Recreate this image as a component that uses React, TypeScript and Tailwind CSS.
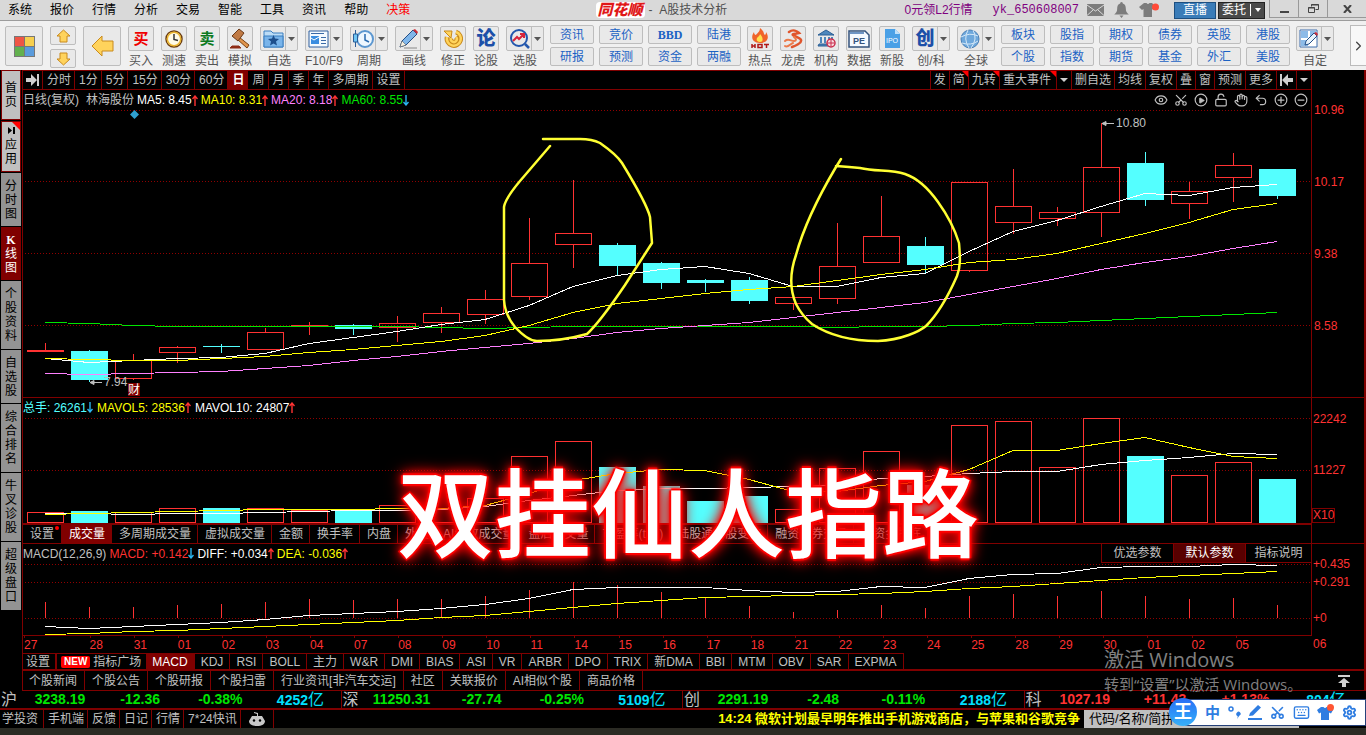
import React from 'react';
import { ChevronRight, Circle, Eye, Hand, Keyboard, LockOpen, Minus, Play, Plus, Scissors, Settings, Undo2 } from 'lucide-react';

type Candle = [high: number, top: number, bottom: number, low: number, down: boolean];

const START_X = 45;
const STEP = 44;
const BODY = 37;

const xAt = (i: number) => START_X + i * STEP;

const candles: Candle[] = [
  [343, 350, 352, 352, false],
  [350, 351, 380, 382, true],
  [354, 360, 378, 380, false],
  [346, 347, 352, 363, false],
  [344, 346, 347, 353, true],
  [328, 332, 349, 349, false],
  [322, 325, 327, 335, false],
  [324, 325, 329, 335, true],
  [316, 323, 327, 342, false],
  [307, 313, 322, 333, false],
  [290, 299, 314, 324, false],
  [218, 263, 296, 300, false],
  [180, 233, 244, 268, false],
  [243, 245, 266, 275, true],
  [262, 263, 283, 289, true],
  [279, 280, 283, 292, true],
  [277, 280, 301, 304, true],
  [297, 297, 303, 310, false],
  [223, 266, 298, 304, false],
  [196, 236, 262, 262, false],
  [237, 246, 265, 273, true],
  [182, 182, 270, 272, false],
  [169, 206, 222, 234, false],
  [207, 212, 218, 226, false],
  [123, 167, 212, 237, false],
  [152, 163, 200, 206, true],
  [182, 191, 203, 219, false],
  [153, 165, 177, 202, false],
  [169, 169, 196, 199, true],
];

const ma5 = [358, 362, 360, 358, 357, 353, 343, 337, 331, 324, 319, 305, 286, 275, 269, 266, 273, 286, 286, 277, 273, 251, 231, 220, 206, 193, 195, 187, 184];
const ma10 = [358, 359, 360, 360, 358, 356, 352, 349, 345, 341, 335, 325, 312, 303, 298, 293, 289, 286, 280, 274, 269, 262, 259, 253, 243, 233, 222, 209, 203];
const ma20 = [373, 374, 373, 372, 371, 368, 365, 360, 356, 351, 347, 343, 338, 332, 328, 325, 322, 317, 312, 307, 302, 294, 286, 278, 269, 262, 256, 248, 241];
const ma60 = [322, 323, 325, 326, 326, 326, 326, 326, 326, 327, 328, 327, 326, 326, 326, 326, 326, 326, 327, 326, 326, 325, 323, 322, 320, 318, 316, 314, 312];

const volumes = [512, 511, 512, 508, 508, 508, 510, 510, 505, 509, 498, 456, 441, 467, 486, 501, 496, 509, 468, 451, 485, 425, 421, 467, 418, 456, 475, 462, 479];
const mavol5 = [514, 513, 512, 511, 510, 509, 509, 509, 508, 508, 505, 493, 480, 473, 469, 470, 479, 491, 491, 485, 481, 469, 450, 450, 443, 437, 447, 456, 458];
const mavol10 = [513, 513, 514, 513, 513, 512, 511, 510, 510, 509, 506, 500, 495, 490, 488, 488, 487, 486, 484, 478, 476, 473, 471, 471, 464, 460, 457, 453, 454];

const macdBars = [602, 607, 607, 605, 604, 602, 599, 600, 599, 599, 596, 590, 582, 585, 592, 597, 606, 612, 610, 605, 608, 596, 594, 596, 591, 596, 599, 598, 605];
const diff = [626, 628, 626, 624, 622, 619, 615, 613, 611, 608, 604, 598, 589, 587, 587, 587, 590, 592, 591, 586, 587, 578, 574, 573, 567, 566, 566, 564, 565];
const dea = [634, 633, 631, 630, 628, 626, 624, 622, 620, 617, 615, 611, 607, 603, 600, 597, 596, 595, 594, 593, 591, 588, 586, 583, 580, 577, 575, 573, 571];

const dates = ['28', '31', '01', '02', '03', '04', '07', '08', '09', '10', '11', '14', '15', '16', '17', '18', '21', '22', '23', '24', '25', '28', '29', '30', '01', '02'];

const menus = ['系统', '报价', '行情', '分析', '交易', '智能', '工具', '资讯', '帮助'];
const periods = ['分时', '1分', '5分', '15分', '30分', '60分', '日', '周', '月', '季', '年', '多周期', '设置'];
const volumeTabs = ['成交量', '多周期成交量', '虚拟成交量', '金额', '换手率', '内盘', '外盘', 'AI缩放成交量', '盘后成交量', '市盈率(ttm)', '陆股通持股变化', '融资融券交易', '大资金抄底'];
const indicatorTabs = ['MACD', 'KDJ', 'RSI', 'BOLL', '主力', 'W&R', 'DMI', 'BIAS', 'ASI', 'VR', 'ARBR', 'DPO', 'TRIX', '新DMA', 'BBI', 'MTM', 'OBV', 'SAR', 'EXPMA'];
const newsTabs = ['个股新闻', '个股公告', '个股研报', '个股扫雷', '行业资讯[非汽车交运]', '社区', '关联报价', 'AI相似个股', '商品价格'];
const bottomTabs = ['学投资', '手机端', '反馈', '日记', '行情', '7*24快讯'];

const indexes = [
  { name: '沪', value: '3238.19', change: '-12.36', pct: '-0.38%', amount: '4252', up: false },
  { name: '深', value: '11250.31', change: '-27.74', pct: '-0.25%', amount: '5109', up: false },
  { name: '创', value: '2291.19', change: '-2.48', pct: '-0.11%', amount: '2188', up: false },
  { name: '科', value: '1027.19', change: '+11.43', pct: '+1.13%', amount: '804', up: true },
];

const Series = ({ data, color }: { data: number[]; color: string }) => (
  <polyline points={data.map((y, i) => `${xAt(i)},${y + 0.5}`).join(' ')} fill="none" stroke={color} strokeWidth="1" />
);

const GridLine = ({ y }: { y: number }) => (
  <line x1="25" x2="1310" y1={y + 0.5} y2={y + 0.5} stroke="#900000" strokeDasharray="1 2" />
);

const Trend = ({ down }: { down?: boolean }) => (
  <svg width="6" height="11" viewBox="0 0 6 11" className="shrink-0" fill="none" strokeWidth="1.400" stroke={down ? '#2ab5f0' : '#ff3232'}>
    {down ? <path d="M3 0v10M.5 7L3 10l2.500-3" /> : <path d="M3 11V1M.5 4L3 1l2.500 3" />}
  </svg>
);

/* ---------- title bar ---------- */

const TitleBar = () => (
  <header className="flex h-[21px] items-center border-b border-[#9c9c9c] bg-[#d9d9d9] text-black">
    <nav className="flex gap-[18px] pl-2">
      {menus.map(m => <button key={m}>{m}</button>)}
      <button className="text-[#ff0000]">决策</button>
    </nav>
    <h1 className="flex flex-1 items-center justify-center gap-1 pl-2 text-[#505050]">
      <span className="rounded-sm bg-white px-[2px] text-[15px] font-black italic leading-4 text-[#e01818]">同花顺</span>
      <span>- &nbsp;A股技术分析</span>
    </h1>
    <div className="flex items-center gap-5 text-[#800080]">
      <a href="#level2">0元领L2行情</a>
      <span className="font-['Liberation_Mono',monospace]">yk_650608007</span>
    </div>
    <div className="flex items-center gap-[10px] pl-2 pr-[15px]">
      <button aria-label="邮件">
        <svg width="17" height="12" viewBox="0 0 17 12" className="block"><rect width="17" height="12" fill="#7c7c7c" /><path d="M0 1l8.500 6L17 1M0 11.500l6-5.500M17 11.500l-6-5.500" stroke="#d9d9d9" fill="none" /></svg>
      </button>
      <button aria-label="提醒">
        <svg width="15" height="16" viewBox="0 0 15 16" className="block" fill="#7c7c7c"><path d="M7.500 0c1 0 1.300.8 1.300 1.500 2.500.8 3 3 3 5 0 3 1 4.500 3 6H.2c2-1.500 3-3 3-6 0-2 .5-4.200 3-5C6.200.8 6.500 0 7.500 0zM5.500 13.500h4L7.500 16z" /></svg>
      </button>
      <button aria-label="换肤">
        <svg width="20" height="16" viewBox="0 0 20 16" className="block"><path d="M5 1l2.500 0q1.500 2 3 0H13l4 4-2.500 3-1.500-1v8H4.500V7L3 8 0 5z" fill="#7c7c7c" /><circle cx="16.500" cy="5" r="3.500" fill="#ff4a38" /></svg>
      </button>
    </div>
    <div className="flex h-[19px] items-center gap-[2px] text-xs text-white">
      <button className="h-[17px] w-[42px] border border-[#1d4f80] bg-[#3a7cb8] leading-[14px]">直播</button>
      <button className="flex h-[17px] w-[47px] items-center justify-center gap-1 border border-[#222] bg-[#4a4a4a] leading-[14px]">
        <span>委托</span>
        <span className="h-3 w-px bg-white" />
        <svg width="6" height="4" viewBox="0 0 6 4" fill="#fff"><path d="M0 0h6L3 4z" /></svg>
      </button>
    </div>
    <div className="ml-1 flex h-[18px] self-start border-b border-l border-[#999] text-[#444]">
      <button aria-label="最小化" className="flex w-[29px] items-end justify-center border-r border-[#999] pb-[4px]"><span className="h-[2px] w-[9px] bg-[#444]" /></button>
      <button aria-label="还原" className="flex w-[29px] items-center justify-center border-r border-[#999]">
        <svg width="11" height="9" viewBox="0 0 11 9" fill="none" stroke="#444"><path d="M3.500 2.500v-2h7v5h-3M.5 3.500h6v5h-6zM3 1h8M0 4h7" /></svg>
      </button>
      <button aria-label="关闭" className="flex w-[38px] items-center justify-center">
        <svg width="9" height="8" viewBox="0 0 9 8" stroke="#444" strokeWidth="2"><path d="M1 0l7 8M8 0L1 8" /></svg>
      </button>
    </div>
  </header>
);

/* ---------- toolbar ---------- */

const FRAME = 'rounded-[2px] border border-[#bdbdbd] bg-[#e9e9e9]';

interface ToolProps {
  label: string;
  drop?: boolean;
  children: React.ReactNode;
}

const Tool = ({ label, drop, children }: ToolProps) => (
  <button className="flex flex-col items-center gap-[2px] pt-[5px] text-[#555]">
    <span className={`flex h-[25px] items-stretch ${FRAME}`}>
      <span className="flex w-6 items-center justify-center">{children}</span>
      {drop && (
        <span className="flex w-3 items-center justify-center border-l border-[#bdbdbd]">
          <svg width="7" height="4" viewBox="0 0 7 4" fill="#555"><path d="M0 0h7L3.500 4z" /></svg>
        </span>
      )}
    </span>
    <span className="leading-4">{label}</span>
  </button>
);

const LinkGrid = ({ rows }: { rows: string[][] }) => (
  <div className="flex flex-col gap-[3px] pt-1">
    {rows.map((row, r) => (
      <div key={r} className="flex gap-[5px]">
        {row.map(t => (
          <button key={t} className={`h-[19px] w-[44px] leading-4 text-[#1b62c4] ${FRAME} ${t === 'BBD' ? "font-['Liberation_Serif',serif] font-bold" : ''}`}>{t}</button>
        ))}
      </div>
    ))}
  </div>
);

const Arrow = ({ d, w, h, box }: { d: string; w: number; h: number; box: string }) => (
  <svg width={w} height={h} viewBox={box}><path d={d} fill="#ffd35c" stroke="#c98a1c" strokeLinejoin="round" /></svg>
);

const Toolbar = () => (
  <div className="flex h-[49px] gap-[7px] overflow-hidden bg-[#f0f0f0] pl-[5px]">
    <button aria-label="主页" className={`mt-[5px] flex h-10 w-[38px] items-center justify-center ${FRAME}`}>
      <svg width="21" height="21" viewBox="0 0 21 21"><path fill="#777" d="M0 0h21v21H0z" /><path fill="#ef5545" d="M1 1h9v9H1z" /><path fill="#f7cf4e" d="M11 1h9v9h-9z" /><path fill="#62b04e" d="M1 11h9v9H1z" /><path fill="#5a9bdc" d="M11 11h9v9h-9z" /></svg>
    </button>
    <div className="flex flex-col gap-1 pt-[5px]">
      <button aria-label="上一个" className={`flex h-[19px] w-[26px] items-center justify-center ${FRAME}`}><Arrow w={15} h={14} box="0 0 15 14" d="M7.500 1L14 7h-3v6H4V7H1z" /></button>
      <button aria-label="下一个" className={`flex h-[19px] w-[26px] items-center justify-center ${FRAME}`}><Arrow w={15} h={14} box="0 0 15 14" d="M7.500 13L14 7h-3V1H4v6H1z" /></button>
    </div>
    <button aria-label="返回" className={`mt-[5px] flex h-10 w-[38px] items-center justify-center ${FRAME}`}><Arrow w={23} h={22} box="0 0 23 22" d="M1 11L11 1v5h11v10H11v5z" /></button>

    <Tool label="买入"><b className="text-[15px] leading-5 text-[#f00000]">买</b></Tool>
    <Tool label="测速">
      <svg width="20" height="20" viewBox="0 0 20 20"><circle cx="10" cy="10" r="8" fill="#fffbe8" stroke="#6b3d10" strokeWidth="1.500" /><circle cx="10" cy="10" r="6.700" fill="none" stroke="#eab42e" strokeWidth="1.500" /><path d="M10 5v5.500l4 1" stroke="#333" strokeWidth="1.500" fill="none" /></svg>
    </Tool>
    <Tool label="卖出"><b className="text-[15px] leading-5 text-[#0b7a1e]">卖</b></Tool>
    <Tool label="模拟">
      <svg width="22" height="22" viewBox="0 0 22 22"><path d="M10 9l10 8-2 3-10-9z" fill="#e0954d" stroke="#7b4010" /><path d="M3 8l7-7 5 4-6 8z" fill="#c07a45" stroke="#6b3a18" /><path d="M1 20l2-2h7l2 2z" fill="#8f2d14" stroke="#8f2d14" /></svg>
    </Tool>
    <Tool label="自选" drop>
      <svg width="21" height="19" viewBox="0 0 21 19"><path d="M1 2h7l2 2h10v14H1z" fill="#bcdcf6" stroke="#3b7fc0" /><path d="M1 7h19v11H1z" fill="#79b4ea" stroke="#3b7fc0" /><path d="M10.500 6l1.500 3.500 4 .4-3 2.600 1 4-3.500-2-3.500 2 1-4-3-2.600 4-.4z" fill="#1d4e8c" /></svg>
    </Tool>
    <Tool label="F10/F9" drop>
      <svg width="21" height="18" viewBox="0 0 21 18"><path d="M1 1h19v16H1z" fill="#f4faff" stroke="#2f5f9e" /><path d="M3 6h8v8H3z" fill="#3a8de0" /><path d="M3 8l3 2 5-3" stroke="#fff" fill="none" /><path d="M3 3.500h13M13 7.500h5M13 10.500h5M13 13.500h5" stroke="#3a6aa8" /></svg>
    </Tool>
    <Tool label="周期" drop>
      <svg width="22" height="20" viewBox="0 0 22 20"><circle cx="13" cy="10" r="8" fill="#eef7ff" stroke="#5c97d0" strokeWidth="2" /><path d="M13 5v6l4 2" stroke="#2a6bb0" fill="none" strokeWidth="1.500" /><path d="M3.500 1v17" stroke="#2a5c96" /><path d="M1.500 5h4v8h-4z" fill="#6fc6f5" stroke="#2a5c96" /></svg>
    </Tool>
    <Tool label="画线" drop>
      <svg width="21" height="21" viewBox="0 0 21 21"><path d="M2 19l2-6L15 2l4 4L8 17z" fill="#7fb6ea" stroke="#254f86" /><path d="M15 2l4 4 1-2-3-3z" fill="#cf2f3a" /><path d="M2 19l2-6 4 4z" fill="#f5f0e0" stroke="#555" strokeWidth=".5" /><path d="M6 20h13" stroke="#888" /></svg>
    </Tool>
    <Tool label="修正">
      <svg width="20" height="20" viewBox="0 0 20 20" fill="none">
        <path d="M4 8a7 7 0 1 0 9-5M8 9a3 3 0 1 0 5-1" stroke="#c98a1c" strokeWidth="4.500" />
        <path d="M4 8a7 7 0 1 0 9-5M8 9a3 3 0 1 0 5-1" stroke="#ffd45c" strokeWidth="2.500" />
        <path d="M1 2h8l-1 7z" fill="#ffd45c" stroke="#c98a1c" />
      </svg>
    </Tool>
    <Tool label="论股"><b className="text-[19px] font-black leading-6 text-[#1c4fa8]">论</b></Tool>
    <Tool label="选股" drop>
      <svg width="21" height="21" viewBox="0 0 21 21" fill="none"><circle cx="10" cy="10" r="8" stroke="#2357ad" strokeWidth="2" /><path d="M16 16l4 4" stroke="#2357ad" strokeWidth="2.500" /><path d="M4 13l4-4 2 2 5-5M11 6h4v4" stroke="#d8243a" strokeWidth="2" /></svg>
    </Tool>

    <div className="-mx-px"><LinkGrid rows={[['资讯', '竞价', 'BBD', '陆港'], ['研报', '预测', '资金', '两融']]} /></div>

    <Tool label="热点">
      <svg width="20" height="21" viewBox="0 0 20 21"><path d="M10 0c5 4 3 6 5 7 1-1 1-2 1-3 3 4 3 11-6 11S1 8 4 4c0 2 1 3 2 3 1-2 4-3 4-7z" fill="#f0642a" /><path d="M10 6c3 3 4 8 0 8s-4-4-2-5c1-1 2-2 2-3z" fill="#ffe14d" /><path d="M2 16v4M5 16v4M2 18h3M8 16.500h4v3H8zM14 16.500h5M16.500 16v4" stroke="#b01818" strokeWidth="1.500" fill="none" /></svg>
    </Tool>
    <Tool label="龙虎">
      <svg width="21" height="20" viewBox="0 0 21 20" fill="none" strokeLinecap="round"><path d="M6 3c4-3 8-1 10 1l-5 1c-5 1 6 3 7 6s-6 6-9 7" stroke="#e0552c" strokeWidth="2.500" /><path d="M2 12c3-3 6 0 9 0s2-3 0-4M2 17c3 2 5-2 8-3" stroke="#ec7a4a" strokeWidth="2" /></svg>
    </Tool>
    <Tool label="机构">
      <svg width="19" height="19" viewBox="0 0 19 19"><path d="M1 6l8-5 8 5zM2 15h10v2H1z" fill="#4d87bd" stroke="#2b5f95" /><path d="M4 8v6M8 8v6M12 8v3M15 8v2" stroke="#4d87bd" strokeWidth="2" /><circle cx="14" cy="14" r="4" fill="#f8dbe0" stroke="#c92c4c" strokeWidth="1.500" /><path d="M11 14h6M14 11v6" stroke="#c92c4c" /></svg>
    </Tool>
    <Tool label="数据">
      <svg width="22" height="18" viewBox="0 0 22 18"><path d="M1 1h16l4 4v12H1z" fill="#f5f9ff" stroke="#34537e" strokeWidth="1.500" /><path d="M2 3h14" stroke="#6e94c4" strokeWidth="2" /><text x="11" y="14" textAnchor="middle" fontSize="9" fontWeight="bold" fill="#34537e">PE</text></svg>
    </Tool>
    <Tool label="新股">
      <svg width="15" height="19" viewBox="0 0 15 19"><path d="M0 0h10l5 5v14H0z" fill="#4aa0e6" /><path d="M10 0l5 5h-5z" fill="#bfe0fa" /><text x="7" y="14" textAnchor="middle" fontSize="7" fill="#fff">IPO</text></svg>
    </Tool>
    <Tool label="创/科" drop><b className="text-[19px] font-black leading-6 text-[#1c4fa8]">创</b></Tool>
    <Tool label="全球" drop>
      <svg width="20" height="20" viewBox="0 0 20 20" fill="none"><circle cx="10" cy="10" r="9" fill="#6ea8dc" stroke="#4a7fb5" /><path d="M1 8q9-5 17-1M2 14q9 3 16-2M8 1q-5 9 1 18M13 1q5 9-2 18" stroke="#d5e8f8" /></svg>
    </Tool>

    <div className="-mx-px"><LinkGrid rows={[['板块', '股指', '期权', '债券', '英股', '港股'], ['个股', '指数', '期货', '基金', '外汇', '美股']]} /></div>

    <Tool label="自定" drop>
      <svg width="20" height="19" viewBox="0 0 20 19"><path d="M1 1h17v17H1z" fill="#fff" stroke="#3f6fae" /><path d="M2 2h7v7H2zM11 2h6v7h-6zM2 11h7v6H2z" fill="#8dbbe8" /><path d="M6 16l1-4 8-8 3 3-8 8z" fill="#e9f3fc" stroke="#254f86" /><path d="M15 4l3 3 1-2-2-2z" fill="#cf2f3a" /></svg>
    </Tool>
    <button aria-label="更多工具" className="ml-auto mt-1 flex h-[41px] w-4 items-center justify-center border border-r-0 border-[#bbb] bg-[#f8f8f8] text-[#444]"><ChevronRight size={16} /></button>
  </div>
);

/* ---------- left side tabs ---------- */

const sideTabs = [
  { text: '首页', cls: 'h-[50px] border border-[#800000] bg-[#c0c0c0] text-black' },
  { text: '应用', cls: 'h-[51px] border border-[#800000] bg-[#c0c0c0] text-black', icon: true },
  { text: '分时图', cls: 'h-[53px] bg-[#939393] text-black' },
  { text: 'K线图', cls: 'h-[53px] bg-[#800000] text-white' },
  { text: '个股资料', cls: 'h-[68px] bg-[#939393] text-black' },
  { text: '自选股', cls: 'h-[53px] bg-[#939393] text-black' },
  { text: '综合排名', cls: 'h-[68px] bg-[#939393] text-black' },
  { text: '牛叉诊股', cls: 'h-[68px] bg-[#939393] text-black' },
  { text: '超级盘口', cls: 'h-[68px] bg-[#939393] text-black' },
];

const SideBar = () => (
  <aside className="flex w-[22px] shrink-0 flex-col pl-px pr-px">
    {sideTabs.map(tab => (
      <div key={tab.text} className="border-b border-black">
        <button className={`relative flex w-full flex-col items-center justify-center leading-[14px] ${tab.cls}`}>
          {tab.icon && (
            <>
              <span className="absolute right-0 top-0 border-l-[8px] border-t-[8px] border-l-transparent border-t-[#ff0000]" />
              <svg width="7" height="7" viewBox="0 0 7 7" className="mb-1"><path d="M0 0l4 3.500L0 7zM5 0h2v7H5z" /></svg>
            </>
          )}
          {tab.text.split('').map((c, i) => <span key={i} className={c === 'K' ? "font-['Liberation_Serif',serif] font-bold" : ''}>{c}</span>)}
        </button>
      </div>
    ))}
  </aside>
);

/* ---------- charts ---------- */

const CELL = 'relative flex items-center border-l border-[#800000] px-[3px]';

const Corner = () => (
  <span className="absolute right-0 top-0 border-l-[6px] border-t-[6px] border-l-transparent border-t-[#ff0000]" />
);

const Caret = () => (
  <svg width="8" height="4" viewBox="0 0 8 4" fill="#d0d0d0"><path d="M0 0h8L4 4z" /></svg>
);

const PeriodBar = () => (
  <div className="flex h-5 border-b border-t border-[#800000] leading-[18px]">
    <button aria-label="向右" className="flex w-5 items-center justify-center border-r border-[#800000]">
      <svg width="13" height="12" viewBox="0 0 13 12" fill="#d0d0d0"><path d="M0 4h5V0l6 6-6 6V8H0zM11 0h2v12h-2z" /></svg>
    </button>
    {periods.map(p => (
      <button key={p} className={`border-r border-[#800000] pl-1 pr-[3px] ${p === '日' ? 'bg-[#800000] font-bold text-white' : ''}`}>{p}</button>
    ))}
    <div className="ml-auto flex">
      <button className={CELL}>发</button>
      <button className={CELL}>简<Corner /></button>
      <button className={CELL}>九转<Corner /></button>
      <button className={`${CELL} pr-[5px]`}>重大事件<Corner /></button>
      <button className={CELL} aria-label="展开事件"><Caret /></button>
      {['删自选', '均线', '复权', '叠', '窗', '预测', '更多'].map(t => <button key={t} className={CELL}>{t}</button>)}
      <button className={CELL} aria-label="向左">
        <svg width="13" height="12" viewBox="0 0 13 12" fill="#d0d0d0"><path d="M13 4H8V0L2 6l6 6V8h5zM0 0h2v12H0z" /></svg>
      </button>
      <button className={CELL} aria-label="展开"><Caret /></button>
    </div>
  </div>
);

const PricePane = () => (
  <section className="border-b border-[#800000]">
    <div className="flex h-5 items-center gap-[3px] leading-5">
      <span className="pr-1">日线(复权)</span>
      <span>林海股份</span>
      <span className="flex items-center text-white">MA5: 8.45<Trend /></span>
      <span className="flex items-center text-[#ffff00]">MA10: 8.31<Trend /></span>
      <span className="flex items-center text-[#ff80ff]">MA20: 8.18<Trend /></span>
      <span className="flex items-center text-[#00e600]">MA60: 8.55<Trend down /></span>
      <div className="ml-auto flex gap-[6px] pr-[3px] text-[#c0c0c0]">
        <button aria-label="显示"><Eye size={14} /></button>
        <button aria-label="剪切"><Scissors size={14} className="-rotate-90" /></button>
        <button aria-label="播放" className="grid place-items-center">
          <Circle size={14} className="col-start-1 row-start-1" />
          <Play size={7} fill="#c0c0c0" className="col-start-1 row-start-1" />
        </button>
        <button aria-label="锁定"><LockOpen size={14} /></button>
        <button aria-label="拖动"><Hand size={14} /></button>
        <button aria-label="撤销"><Undo2 size={14} /></button>
        <button aria-label="放大" className="grid place-items-center">
          <Circle size={14} className="col-start-1 row-start-1" />
          <Plus size={10} strokeWidth={3} className="col-start-1 row-start-1" />
        </button>
        <button aria-label="缩小" className="grid place-items-center">
          <Circle size={14} className="col-start-1 row-start-1" />
          <Minus size={10} strokeWidth={3} className="col-start-1 row-start-1" />
        </button>
      </div>
    </div>
    <svg viewBox="23 110 1288 287" preserveAspectRatio="none" className="block h-[287px] w-full">
      <g shapeRendering="crispEdges">
        {[110, 181, 253, 325].map(y => <GridLine key={y} y={y} />)}
        {candles.map(([high, top, bottom, low, down], i) => {
          const x = xAt(i);
          const color = down ? '#54ffff' : '#ff3232';
          return (
            <g key={i} stroke={color}>
              <path d={`M${x + 0.5} ${high}V${top}M${x + 0.5} ${bottom}V${low}`} />
              {down || bottom - top < 3
                ? <rect x={x - 18} y={top} width={BODY} height={bottom - top} fill={color} stroke="none" />
                : <rect x={x - 17.5} y={top + 0.5} width={BODY - 1} height={bottom - top} fill="none" />}
            </g>
          );
        })}
        <Series data={ma60} color="#00e600" />
        <Series data={ma20} color="#ff80ff" />
        <Series data={ma5} color="#ffffff" />
        <Series data={ma10} color="#ffff00" />
      </g>
      <path d="M134.500 110l4.500 4.500-4.500 4.500-4.500-4.500z" fill="#2f9fd0" />
      <path d="M1102 123.500h12M1102 123.500l4-2v4zM90 382.500h12M90 382.500l4-2v4z" stroke="#c0c0c0" fill="#c0c0c0" />
      <text x="1116" y="127" fontSize="12" fill="#c0c0c0">10.80</text>
      <text x="104" y="386" fontSize="12" fill="#c0c0c0">7.94</text>
      <rect x="128" y="383" width="12" height="13" fill="#800000" />
      <text x="128" y="394" fontSize="12" fill="#fff">财</text>
      <g fill="none" stroke="#ffff32" strokeWidth="2.500" strokeLinecap="round" strokeLinejoin="round">
        <path d="M550 146L520 181Q505 199 504 207V300Q505 315 515 327Q528 341 537 341Q562 341 587 334Q600 322 625 285L652 243L650 217Q647 204 622 163Q617 155 600 143Q592 139 580 139H543" />
        <path d="M841 159L836 167C820 194 805 222 796 255C790 272 790 290 796 304C800 312 806 319 812 324C830 336 852 341 878 341C902 340 920 331 926 326C940 312 950 292 957 276C961 266 960 256 959 243C954 227 946 213 938 202C928 188 917 178 905 174C890 169 876 172 860 168Q850 167 836 166" />
      </g>
    </svg>
  </section>
);

const VolumePane = () => (
  <section>
    <div className="flex h-[19px] items-center gap-1 leading-5">
      <span className="flex items-center text-[#54ffff]">总手: 26261<Trend down /></span>
      <span className="flex items-center text-[#ffff00]">MAVOL5: 28536<Trend /></span>
      <span className="flex items-center text-white">MAVOL10: 24807<Trend /></span>
    </div>
    <svg viewBox="23 417 1288 106" preserveAspectRatio="none" shapeRendering="crispEdges" className="block h-[106px] w-full">
      <GridLine y={418} />
      <GridLine y={470} />
      {volumes.map((top, i) => candles[i][4]
        ? <rect key={i} x={xAt(i) - 18} y={top} width={BODY} height={523 - top} fill="#54ffff" />
        : <rect key={i} x={xAt(i) - 17.5} y={top + 0.5} width={BODY - 1} height={522 - top} fill="none" stroke="#ff3232" />)}
      <Series data={mavol10} color="#ffffff" />
      <Series data={mavol5} color="#ffff00" />
    </svg>
    <div className="flex h-[21px] border-b border-t-2 border-[#800000] leading-[19px]">
      <button className="relative w-[39px] border-r border-[#800000]">
        设置
        <span className="absolute right-[2px] top-[1px] h-1 w-1 rounded-full bg-[#ff0000]" />
      </button>
      {volumeTabs.map((t, i) => (
        <button key={t} className={`shrink-0 whitespace-nowrap border-r border-[#800000] pl-[7px] pr-[6px] ${i === 0 ? 'bg-[#800000] text-white' : ''}`}>{t}</button>
      ))}
    </div>
  </section>
);

const MacdPane = () => (
  <section className="border-b border-[#800000]">
    <div className="flex h-[19px] items-center gap-[3px] leading-4">
      <span>MACD(12,26,9)</span>
      <span className="flex items-center text-[#ff3232]">MACD: +0.142<Trend down /></span>
      <span className="flex items-center text-white">DIFF: +0.034<Trend /></span>
      <span className="flex items-center text-[#ffff00]">DEA: -0.036<Trend /></span>
      <div className="ml-auto flex h-full border-b border-l border-[#800000] leading-[18px]">
        <button className="w-[72px] border-r border-[#800000]">优选参数</button>
        <button className="w-[72px] border-r border-[#800000] bg-[#580000] text-white">默认参数</button>
        <button className="w-[65px]">指标说明</button>
      </div>
    </div>
    <svg viewBox="23 563 1288 72" preserveAspectRatio="none" shapeRendering="crispEdges" className="block h-[72px] w-full">
      <GridLine y={564} />
      <GridLine y={582} />
      <GridLine y={618} />
      {macdBars.map((y, i) => <line key={i} x1={xAt(i) + 0.5} x2={xAt(i) + 0.5} y1={y} y2={618} stroke="#ff3232" />)}
      <Series data={dea} color="#ffff00" />
      <Series data={diff} color="#ffffff" />
    </svg>
  </section>
);

const DATE = 'pl-px before:block before:h-[2px] before:w-px before:bg-[#800000]';

const DateAxis = () => (
  <div className="flex h-[17px] leading-[14px] text-[#ff3232]">
    <span className={`w-0 grow-[66] ${DATE}`}>27</span>
    {dates.map((d, i) => <span key={i} className={`w-0 grow-[44] ${DATE}`}>{d}</span>)}
    <span className={`w-0 grow-[78] ${DATE}`}>05</span>
  </div>
);

const ValueAxis = () => (
  <div className="w-[54px] shrink-0 border-r-2 border-[#800000] text-[#ff3232]">
    <div className="h-[328px] border-b border-[#800000] pl-[2px] pt-1 leading-[72px]">
      {['10.96', '10.17', '9.38', '8.58'].map(v => <div key={v} className="h-[72px]">{v}</div>)}
    </div>
    <div className="h-[146px] border-b border-[#800000]">
      <div className="h-[42px] pl-px leading-[42px]">22242</div>
      <div className="h-[60px] pl-px leading-[60px]">11227</div>
      <div className="mt-2 h-[15px] w-[23px] border border-[#800000] leading-[13px]">X10</div>
    </div>
    <div className="pl-px pt-[11px] leading-[18px]">
      <div>+0.435</div>
      <div>+0.291</div>
      <div className="mt-[18px]">+0</div>
      <div className="mt-2">06</div>
    </div>
  </div>
);

/* ---------- bottom rows ---------- */

const BottomTabs = () => (
  <div className="border-r-2 border-[#800000]">
    <div className="flex h-[18px] border-b-2 border-[#800000]">
      <button className="w-[34px] border-r-2 border-t border-[#800000] pl-[3px] text-left leading-4">设置</button>
      <button className="flex items-center gap-[3px] border-t border-[#800000] pl-1 pr-[5px] leading-4">
        <span className="rounded-[2px] bg-[#ff0000] px-[3px] text-[10px] font-bold leading-[12px] text-white">NEW</span>
        指标广场
      </button>
      {indicatorTabs.map((t, i) => (
        <button key={t} className={`border-r border-t border-[#800000] px-[6px] leading-4 ${i === 0 ? 'bg-[#800000] text-white' : ''}`}>{t}</button>
      ))}
    </div>
    <div className="flex h-5 items-center border-b border-[#800000]">
      {newsTabs.map(t => (
        <button key={t} className="h-full border-r border-[#800000] pl-[7px] pr-[7px] leading-5 first:pl-[6px]">{t}</button>
      ))}
      <button aria-label="置顶" className="ml-auto mr-[14px]">
        <svg width="12" height="12" viewBox="0 0 12 12" fill="#d0d0d0" className="block"><path d="M0 0h12v2H0zM6 3l6 5H8v4H4V8H0z" /></svg>
      </button>
    </div>
  </div>
);

const IndexBar = () => (
  <div className="grid h-[19px] grid-cols-4 border-b-2 border-[#800000] text-sm font-bold leading-[17px]">
    {indexes.map(ix => (
      <div key={ix.name} className={`flex border-r border-[#800000] last:border-r-0 ${ix.up ? 'text-[#ff3232]' : 'text-[#00e600]'}`}>
        <span className="w-[20px] pl-px text-base font-normal leading-[17px] text-[#c0c0c0]">{ix.name}</span>
        <span className="flex-1 text-center">{ix.value}</span>
        <span className="flex-1 text-center">{ix.change}</span>
        <span className="flex-1 text-center">{ix.pct}</span>
        <span className="flex-1 text-center text-[#00e0ff]">{ix.amount}<span className="text-base font-normal leading-[17px]">亿</span></span>
      </div>
    ))}
  </div>
);

const FooterBar = () => (
  <footer className="flex h-[18px] leading-[18px]">
    {bottomTabs.map(t => (
      <button key={t} className="border-r border-[#800000] pl-1 pr-[3px] first:pl-[2px] first:pr-[5px]">{t}</button>
    ))}
    <button aria-label="智能助手" className="flex w-[33px] items-center justify-center border-r border-[#800000]">
      <svg width="16" height="14" viewBox="0 0 16 14" fill="#c8c8c8"><path d="M5 0l4 1v3H8V2L5 1zM3 4h10l3 5c0 3-3 5-8 5s-8-2-8-5z" /><circle cx="5" cy="8.500" r="1.200" fill="#000" /><circle cx="11" cy="8.500" r="1.200" fill="#000" /></svg>
    </button>
    <p className="ml-auto whitespace-nowrap pr-1 text-[13px] font-bold leading-[17px] text-[#ffff00]">14:24 微软计划最早明年推出手机游戏商店，与苹果和谷歌竞争</p>
    <input aria-label="代码搜索" placeholder="代码/名称/简拼/功能" className="mr-[67px] w-[215px] bg-[#c0c0c0] pl-[5px] text-[13px] text-black outline-none placeholder:text-black" />
  </footer>
);

const ImeBar = () => (
  <div className="absolute bottom-[9px] right-0 flex h-[27px] w-[186px] items-center justify-between rounded-l-lg border border-[#25417a] bg-white pl-6 pr-2 text-[#2f7de1]">
    <span className="absolute -left-3 -top-[2px] flex h-7 w-7 items-center justify-center rounded-full bg-gradient-to-b from-[#2b6cf5] to-[#38b0f8] text-lg font-bold text-white">王</span>
    <button className="text-[15px] font-bold leading-5">中</button>
    <button aria-label="标点">
      <svg width="13" height="13" viewBox="0 0 13 13" className="block"><circle cx="3" cy="3" r="2" fill="none" stroke="#2f7de1" strokeWidth="1.500" /><path d="M9 6.500a2 2 0 1 1 2.500 3L9 13q1-2 .5-3a2 2 0 0 1-.5-3.500z" fill="#2f7de1" /></svg>
    </button>
    <button aria-label="手写">
      <svg width="15" height="15" viewBox="0 0 15 15" className="block" fill="#2f7de1"><path d="M1 11l1-3 8-8 3 2.500-8 8zM0 13h14v2H0z" /></svg>
    </button>
    <button aria-label="截图"><Scissors size={15} strokeWidth={2.500} className="block -rotate-90" /></button>
    <button aria-label="键盘"><Keyboard size={17} strokeWidth={2} className="block" /></button>
    <button aria-label="皮肤">
      <svg width="17" height="17" viewBox="0 0 17 17" className="block"><path d="M4 3h2.500q1.500 2 3 0H12l4 3-2 3.500-2-1V16H4V8.500l-2 1L0 6z" fill="#2f7de1" /><circle cx="13.500" cy="3.500" r="3.500" fill="#ff5533" /></svg>
    </button>
    <button aria-label="设置"><Settings size={15} strokeWidth={3} className="block" /></button>
  </div>
);

export default function App() {
  return (
    <div className="relative flex min-h-screen flex-col overflow-hidden bg-black font-['Liberation_Sans','Noto_Sans_CJK_SC',sans-serif] text-xs text-[#c0c0c0]">
      <TitleBar />
      <Toolbar />
      <main className="flex">
        <SideBar />
        <div className="min-w-0 flex-1 border-l border-[#800000]">
          <div className="flex">
            <div className="min-w-0 flex-1">
              <div className="border-r border-[#800000]">
                <PeriodBar />
                <PricePane />
                <VolumePane />
                <MacdPane />
              </div>
              <DateAxis />
            </div>
            <ValueAxis />
          </div>
          <BottomTabs />
        </div>
      </main>
      <IndexBar />
      <FooterBar />
      <div className="min-h-[7px] flex-1 bg-[#2b2b24]"><div className="ml-[147px] h-full w-12 bg-[#5c5c55]" /></div>

      {/* caption laid over the charts */}
      <p className="pointer-events-none absolute left-[397px] top-[457px] whitespace-nowrap text-[97px] font-medium leading-[120px] text-white [text-shadow:2px_0_1px_#f00,-2px_0_1px_#f00,0_2px_1px_#f00,0_-2px_1px_#f00,0_0_4px_#f00,0_0_8px_#f00,0_0_14px_#f00,0_0_18px_#f00]">双挂仙人指路</p>

      <div className="pointer-events-none absolute bottom-[39px] right-[62px] w-[200px] whitespace-nowrap font-['Open_Sans','Noto_Sans_CJK_SC',sans-serif] text-[#808080]">
        <p className="text-xl leading-6">激活 Windows</p>
        <p className="text-[15px] leading-6">转到“设置”以激活 Windows。</p>
      </div>
      <ImeBar />
    </div>
  );
}
